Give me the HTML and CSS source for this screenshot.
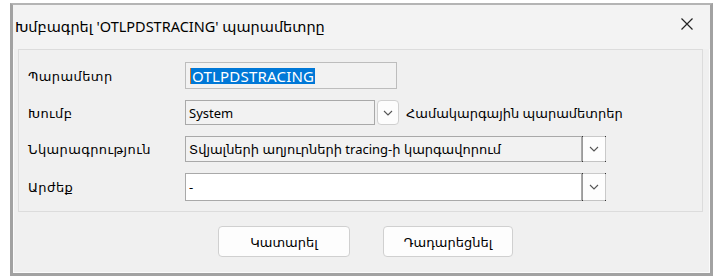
FILE: index.html
```html
<!DOCTYPE html>
<html lang="hy">
<head>
<meta charset="utf-8">
<title>Dialog</title>
<link rel="stylesheet" href="styles.css">
</head>
<body>
<div class="dialog">
  <div class="titlebar">
    <span class="title">Խմբագրել 'OTLPDSTRACING' պարամետրը</span>
    <svg class="close" width="14" height="14" viewBox="0 0 14 14"><path d="M1.5 1.5 L12.5 12.5 M12.5 1.5 L1.5 12.5" stroke="#222" stroke-width="1.2" fill="none"/></svg>
  </div>
  <div class="group">
    <div class="row r1">
      <span class="label">Պարամետր</span>
      <div class="field param"><span class="sel">OTLPDSTRACING</span></div>
    </div>
    <div class="row r2">
      <span class="label">Խումբ</span>
      <div class="field sys">System</div>
      <div class="ddbtn round"><svg width="10" height="6" viewBox="0 0 10 6"><path d="M1 1 L5 5 L9 1" stroke="#555" stroke-width="1.1" fill="none"/></svg></div>
      <span class="note">Համակարգային պարամետրեր</span>
    </div>
    <div class="row r3">
      <span class="label">Նկարագրություն</span>
      <div class="field desc">Տվյալների աղյուրների tracing-ի կարգավորում</div>
      <div class="ddbtn dots"><svg width="10" height="6" viewBox="0 0 10 6"><path d="M1 1 L5 5 L9 1" stroke="#555" stroke-width="1.1" fill="none"/></svg></div>
    </div>
    <div class="row r4">
      <span class="label">Արժեք</span>
      <div class="field val">-</div>
      <div class="ddbtn dots"><svg width="10" height="6" viewBox="0 0 10 6"><path d="M1 1 L5 5 L9 1" stroke="#555" stroke-width="1.1" fill="none"/></svg></div>
    </div>
  </div>
  <div class="buttons">
    <button class="btn ok">Կատարել</button>
    <button class="btn cancel">Դադարեցնել</button>
  </div>
</div>
</body>
</html>
```
FILE: styles.css
```css
html, body {
  margin: 0;
  padding: 0;
  background: #ffffff;
}
body {
  font-family: "Noto Sans", "DejaVu Sans", sans-serif;
  font-size: 13px;
  color: #000;
}
.dialog {
  margin: 3px 0 0 10px;
  width: 697px;
  height: 268px;
  background: #f0f0f0;
  border: 3px solid #a2a2a2;
  border-top: 2px solid #b4b4b4;
  box-shadow: inset 0 0 0 1px #fbfbfb;
  display: flex;
  flex-direction: column;
}
.titlebar {
  height: 44px;
  display: flex;
  align-items: center;
  padding: 0 16px 0 2px;
  background: #f3f3f3;
}
.title {
  flex: 1;
  font-size: 14.5px;
  margin-top: -3px;
}
.close {
  display: block;
  margin-top: -6px;
}
.group {
  margin: 0 7px 0 5px;
  border: 1px solid #dcdcdc;
  padding: 12px 0 10px 9px;
  display: flex;
  flex-direction: column;
  gap: 11px;
}
.row {
  display: flex;
  align-items: stretch;
}
.r1 { height: 27px; }
.r2 { height: 25px; }
.r3 { height: 26px; }
.r4 { height: 28px; }
.label {
  width: 157px;
  display: flex;
  align-items: center;
  letter-spacing: 0.4px;
}
.field {
  box-sizing: border-box;
  border: 1px solid #a9a9a9;
  background: #f2f2f2;
  display: flex;
  align-items: center;
  padding-left: 3px;
  white-space: nowrap;
  overflow: hidden;
}
.param {
  width: 212px;
  border-color: #bdbdbd;
  padding-left: 4px;
}
.sel {
  background: #0078d7;
  color: #fff;
  font-size: 15px;
  line-height: 16px;
  padding: 0 1px;
  letter-spacing: 0.2px;
  border-left: 1px solid #e07a2a;
}
.sys { width: 190px; }
.desc { width: 397px; }
.val { width: 397px; background: #ffffff; }
.ddbtn {
  box-sizing: border-box;
  display: flex;
  align-items: center;
  justify-content: center;
  background: #fdfdfd;
  border: 1px solid #c9c9c9;
  position: relative;
}
.round {
  width: 22px;
  margin-left: 2px;
  border-radius: 4px;
  border-color: #d0d0d0;
}
.dots {
  width: 24px;
  border-left-color: #9a9a9a;
  border-bottom-color: #c4c4c4;
}
.dots::before {
  content: "";
  position: absolute;
  left: -1px;
  top: -1px;
  width: 1px;
  height: 1px;
  background: #333;
}
.r3 .dots::before { box-shadow: 23px 0 0 #333, 0 25px 0 #333, 23px 25px 0 #333; }
.r4 .dots::before { box-shadow: 23px 0 0 #333, 0 27px 0 #333, 23px 27px 0 #333; }
.note {
  margin-left: 7px;
  display: flex;
  align-items: center;
}
.buttons {
  display: flex;
  gap: 33px;
  padding: 14px 0 0 205px;
}
.btn {
  font-family: "Noto Sans", "DejaVu Sans", sans-serif;
  font-size: 13px;
  height: 31px;
  background: #fdfdfd;
  border: 1px solid #d0d0d0;
  border-radius: 4px;
  padding: 0;
  color: #000;
}
.ok { width: 132px; }
.cancel { width: 130px; }
```
